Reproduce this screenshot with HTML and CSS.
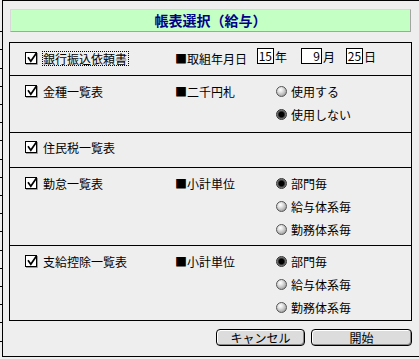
FILE: index.html
```html
<!DOCTYPE html>
<html lang="ja">
<head>
<meta charset="utf-8">
<title>帳表選択（給与）</title>
<link rel="stylesheet" href="styles.css">
</head>
<body>
<div class="desk">
  <div class="edge"></div>
  <div class="window">
    <div class="title">帳表選択（給与）</div>
    <div class="panel">
      <div class="row r-date">
        <label class="check">
          <svg viewBox="0 0 13 13"><rect x="0.5" y="0.5" width="11" height="11" fill="#fff" stroke="#000"/><path d="M1 12.5H12.5V1" stroke="#9a9a9a" fill="none"/><path d="M3 5.3L5.8 9.2L11.3 1.2" fill="none" stroke="#000" stroke-width="1.7"/></svg>
          <span class="label focus">銀行振込依頼書</span>
        </label>
        <span class="key">■取組年月日</span>
        <div class="date">
          <span class="box w17">15</span><span class="unit gap14">年</span>
          <span class="box w21">9</span><span class="unit gap11">月</span>
          <span class="box w17">25</span><span class="unit">日</span>
        </div>
      </div>
      <div class="row r-bill">
        <label class="check">
          <svg viewBox="0 0 13 13"><rect x="0.5" y="0.5" width="11" height="11" fill="#fff" stroke="#000"/><path d="M1 12.5H12.5V1" stroke="#9a9a9a" fill="none"/><path d="M3 5.3L5.8 9.2L11.3 1.2" fill="none" stroke="#000" stroke-width="1.7"/></svg>
          <span class="label">金種一覧表</span>
        </label>
        <span class="key">■二千円札</span>
        <div class="opts">
          <div class="opt"><span class="radio"></span><span>使用する</span></div>
          <div class="opt"><span class="radio on"></span><span>使用しない</span></div>
        </div>
      </div>
      <div class="row r-tax">
        <label class="check">
          <svg viewBox="0 0 13 13"><rect x="0.5" y="0.5" width="11" height="11" fill="#fff" stroke="#000"/><path d="M1 12.5H12.5V1" stroke="#9a9a9a" fill="none"/><path d="M3 5.3L5.8 9.2L11.3 1.2" fill="none" stroke="#000" stroke-width="1.7"/></svg>
          <span class="label">住民税一覧表</span>
        </label>
      </div>
      <div class="row r-att">
        <label class="check">
          <svg viewBox="0 0 13 13"><rect x="0.5" y="0.5" width="11" height="11" fill="#fff" stroke="#000"/><path d="M1 12.5H12.5V1" stroke="#9a9a9a" fill="none"/><path d="M3 5.3L5.8 9.2L11.3 1.2" fill="none" stroke="#000" stroke-width="1.7"/></svg>
          <span class="label">勤怠一覧表</span>
        </label>
        <span class="key">■小計単位</span>
        <div class="opts">
          <div class="opt"><span class="radio on"></span><span>部門毎</span></div>
          <div class="opt"><span class="radio"></span><span>給与体系毎</span></div>
          <div class="opt"><span class="radio"></span><span>勤務体系毎</span></div>
        </div>
      </div>
      <div class="row r-ded">
        <label class="check">
          <svg viewBox="0 0 13 13"><rect x="0.5" y="0.5" width="11" height="11" fill="#fff" stroke="#000"/><path d="M1 12.5H12.5V1" stroke="#9a9a9a" fill="none"/><path d="M3 5.3L5.8 9.2L11.3 1.2" fill="none" stroke="#000" stroke-width="1.7"/></svg>
          <span class="label">支給控除一覧表</span>
        </label>
        <span class="key">■小計単位</span>
        <div class="opts">
          <div class="opt"><span class="radio on"></span><span>部門毎</span></div>
          <div class="opt"><span class="radio"></span><span>給与体系毎</span></div>
          <div class="opt"><span class="radio"></span><span>勤務体系毎</span></div>
        </div>
      </div>
    </div>
    <div class="actions">
      <button class="btn btn-cancel">キャンセル</button>
      <button class="btn btn-start">開始</button>
    </div>
  </div>
</div>
</body>
</html>
```

FILE: styles.css
```css
* { box-sizing: border-box; }
html, body { margin: 0; padding: 0; }
body {
  width: 419px;
  height: 359px;
  background: #eeeeee;
  font-family: "Noto Sans CJK JP", "Noto Sans", sans-serif;
  font-size: 12px;
  color: #000;
  overflow: hidden;
}
.desk { display: flex; height: 359px; }
.edge {
  width: 2px;
  height: 357px;
  padding-top: 14px;
  background: repeating-linear-gradient(to bottom, transparent 0 17.2px, #000 17.2px 18.2px) content-box;
}
.window {
  flex: 1;
  height: 357px;
  border-top: 1px solid #000;
  border-bottom: 1px solid #000;
  border-left: 1px solid #000;
}
.title {
  margin: 8px 0 0 7px;
  width: 401px;
  height: 23px;
  background: #c4ffc4;
  border: 1px solid #a4a4a4;
  border-top-color: #d8d8d8;
  border-left-color: #d8d8d8;
  color: #000088;
  font-weight: bold;
  font-size: 14px;
  line-height: 21px;
  text-align: center;
}
.panel {
  margin: 10px 0 0 6px;
  width: 403px;
  height: 279px;
  border: 1px solid #000;
  display: flex;
  flex-direction: column;
}
.row {
  display: flex;
  align-items: flex-start;
  padding: 4px 0 0 15px;
  border-bottom: 1px solid #000;
}
.row:last-child { border-bottom: 0; flex: 1; }
.r-date { height: 33px; }
.r-bill { height: 57px; }
.r-tax { height: 35px; padding-top: 3px; }
.r-att { height: 78px; }
.check {
  width: 150px;
  height: 23px;
  display: flex;
  align-items: center;
  flex: none;
}
.check svg { width: 13px; height: 13px; flex: none; margin-right: 4px; }
.label {
  border: 1px dotted transparent;
  line-height: 13px;
  padding: 0 1px 0 0;
  white-space: nowrap;
}
.label.focus { border-color: #000; }
.key {
  width: 101px;
  line-height: 23px;
  white-space: nowrap;
  flex: none;
}
.r-date .key { width: auto; }
.date {
  display: flex;
  align-items: flex-start;
  margin-left: 10px;
  padding-top: 1px;
}
.box {
  height: 16px;
  border: 1px solid #000;
  background: #fff;
  text-align: right;
  line-height: 14px;
  padding-right: 1px;
}
.w17 { width: 17px; }
.w21 { width: 21px; }
.unit { line-height: 17px; margin-left: 1px; }
.gap14 { margin-right: 14px; }
.gap11 { margin-right: 11px; }
.opts { display: flex; flex-direction: column; }
.opt { height: 23px; display: flex; align-items: center; gap: 4px; }
.radio {
  width: 11px;
  height: 11px;
  flex: none;
  border-radius: 50%;
  border: 1px solid #555;
  background: radial-gradient(circle at 38% 32%, #ffffff 0, #e2e2e2 30%, #b4b4b4 65%, #7c7c7c 100%);
}
.radio.on {
  border-color: #333;
  background: radial-gradient(circle at 50% 50%, #000 0 2.4px, #2a2a2a 3px, #6e6e6e 4px, #b8b8b8 100%);
}
.actions {
  display: flex;
  justify-content: flex-end;
  gap: 6px;
  margin: 8px 0 0 6px;
  width: 403px;
}
.btn {
  font: inherit;
  color: #000;
  height: 17px;
  padding: 0;
  border: 1px solid #000;
  border-radius: 4px;
  background: #dcdcdc;
  box-shadow: inset 1px 1px #ffffff, inset -1px -1px #8a8a8a;
  line-height: 15px;
}
.btn-cancel { width: 89px; }
.btn-start { width: 101px; }
```
